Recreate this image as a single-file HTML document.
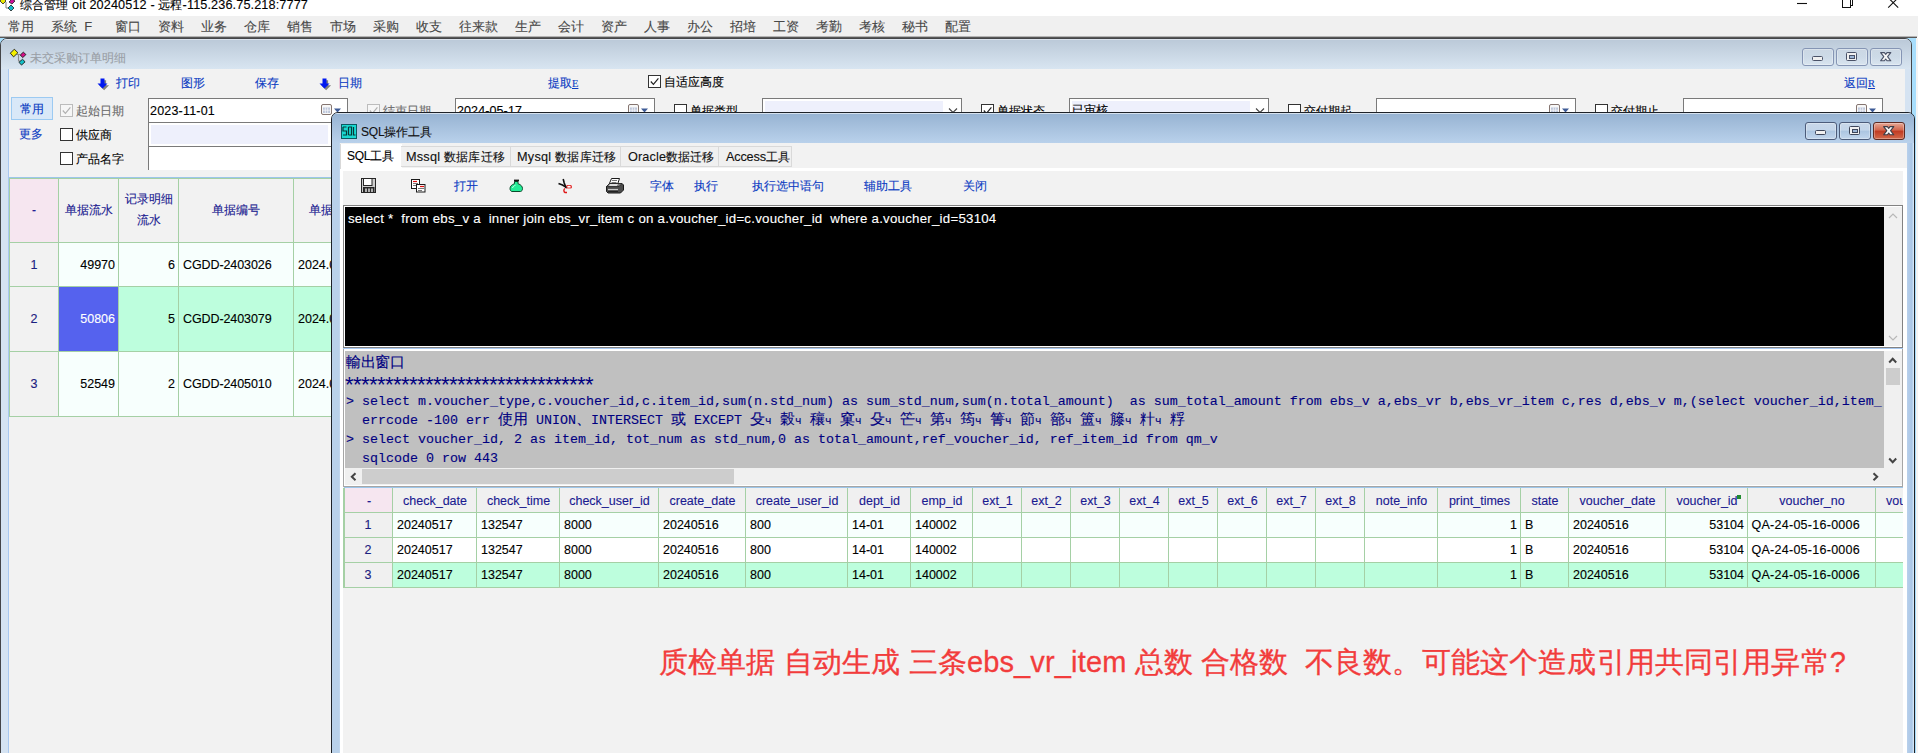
<!DOCTYPE html>
<html><head><meta charset="utf-8"><title>SQL</title>
<style>
*{margin:0;padding:0;box-sizing:border-box}
html,body{width:1918px;height:753px;overflow:hidden;background:#fff}
body{position:relative;font-family:"Liberation Sans",sans-serif;font-size:12px}
.r{position:absolute}
.t{position:absolute;white-space:pre;line-height:16px;height:16px;-webkit-text-stroke:.12px}
.m{font-family:"Liberation Mono",monospace}
.s{font-family:"Liberation Serif",serif}
.L{font-size:12.700px}
svg{position:absolute;overflow:visible}
.cb{position:absolute;width:13px;height:13px;border:1px solid #333;background:#fff}
.cbd{border-color:#bcbcbc;background:#f6f6f6}
.inp{position:absolute;background:#fff;border:1px solid #7a7a7a}
table{border-collapse:collapse}
</style></head><body>

<div class="r" style="left:0px;top:0px;width:1918px;height:16px;background:#fff;"></div>
<svg style="left:0;top:-3px" width="16" height="16" viewBox="0 0 16 16">
<path d="M6 5v6h5" fill="none" stroke="#808080" stroke-width="1"/>
<path d="M0 4l3-3 3 3-3 3z" fill="#e8e800" stroke="#222" stroke-width=".8"/>
<path d="M9 5l3-3 3 2-3 3z" fill="#d0109a" stroke="#222" stroke-width=".8"/>
<path d="M8 11l3-3 3 3-3 3z" fill="#10b8c8" stroke="#222" stroke-width=".8"/>
</svg>
<div class="t " style="left:20px;top:-3px;font-size:12px;color:#000;letter-spacing:0.109px">综合管理<span class="L"> oit 20240512 - </span>远程<span class="L">-115.236.75.218:7777</span></div>
<svg style="left:1790px;top:0" width="120" height="12" viewBox="0 0 120 12">
<path d="M7 3.500h10" stroke="#111" stroke-width="1.100" fill="none"/>
<path d="M52.500 -2V7.500H60.500V-2M62.500 -2V5.500H60.500" stroke="#111" stroke-width="1" fill="none" shape-rendering="crispEdges"/>
<path d="M98.200 -2.300l10 10M108.200 -2.300l-10 10" stroke="#111" stroke-width="1.100" fill="none"/>
</svg>
<div class="r" style="left:0px;top:16px;width:1918px;height:21px;background:#f0f0f0;"></div>
<div class="t " style="left:8px;top:19px;font-size:13px;color:#484848;">常用</div>
<div class="t " style="left:51px;top:19px;font-size:13px;color:#484848;">系统  F</div>
<div class="t " style="left:115px;top:19px;font-size:13px;color:#484848;">窗口</div>
<div class="t " style="left:158px;top:19px;font-size:13px;color:#484848;">资料</div>
<div class="t " style="left:201px;top:19px;font-size:13px;color:#484848;">业务</div>
<div class="t " style="left:244px;top:19px;font-size:13px;color:#484848;">仓库</div>
<div class="t " style="left:287px;top:19px;font-size:13px;color:#484848;">销售</div>
<div class="t " style="left:330px;top:19px;font-size:13px;color:#484848;">市场</div>
<div class="t " style="left:373px;top:19px;font-size:13px;color:#484848;">采购</div>
<div class="t " style="left:416px;top:19px;font-size:13px;color:#484848;">收支</div>
<div class="t " style="left:459px;top:19px;font-size:13px;color:#484848;">往来款</div>
<div class="t " style="left:515px;top:19px;font-size:13px;color:#484848;">生产</div>
<div class="t " style="left:558px;top:19px;font-size:13px;color:#484848;">会计</div>
<div class="t " style="left:601px;top:19px;font-size:13px;color:#484848;">资产</div>
<div class="t " style="left:644px;top:19px;font-size:13px;color:#484848;">人事</div>
<div class="t " style="left:687px;top:19px;font-size:13px;color:#484848;">办公</div>
<div class="t " style="left:730px;top:19px;font-size:13px;color:#484848;">招培</div>
<div class="t " style="left:773px;top:19px;font-size:13px;color:#484848;">工资</div>
<div class="t " style="left:816px;top:19px;font-size:13px;color:#484848;">考勤</div>
<div class="t " style="left:859px;top:19px;font-size:13px;color:#484848;">考核</div>
<div class="t " style="left:902px;top:19px;font-size:13px;color:#484848;">秘书</div>
<div class="t " style="left:945px;top:19px;font-size:13px;color:#484848;">配置</div>
<div class="r" style="left:0px;top:36px;width:1917px;height:1px;background:#b4b4b4;"></div>
<div class="r" style="left:0px;top:37px;width:1917px;height:1px;background:#585858;"></div>
<div class="r" style="left:0px;top:38px;width:1916px;height:720px;background:#a8defc;"></div>
<div class="r" style="left:1916px;top:38px;width:2px;height:720px;background:#f4f4f4;"></div>
<div class="r" style="left:0;top:38px;width:1912px;height:720px;background:#d5e3f2;border:1px solid #444548;border-radius:7px 7px 0 0"></div>
<div class="r" style="left:1px;top:39px;width:1910px;height:30px;background:linear-gradient(#e9eef5,#bccad9 1.500px,#d8e5f1);border-radius:6px 6px 0 0"></div>
<svg style="left:0;top:0" width="40" height="70" viewBox="0 0 40 70">
<path d="M16.500 54.500h4M18.500 54.500v6.500h2" fill="none" stroke="#8a8a8a" stroke-width="1.100"/>
<path d="M10.300 53.200l4-4 3.600 3.500-4.300 4.200z" fill="#f4f000" stroke="#1a1a1a" stroke-width=".9"/>
<path d="M20.300 55l3-2.800 2.600 2.300-3.100 3.100z" fill="#d8108a" stroke="#1a1a1a" stroke-width=".9"/>
<path d="M19 62.300l3.500-3 2.600 2.500-3.600 3.300z" fill="#10c0c8" stroke="#1a1a1a" stroke-width=".9"/>
</svg>
<div class="t " style="left:30px;top:49.5px;font-size:12px;color:#9a9fa6;">未交采购订单明细</div>
<div class="r" style="left:1802px;top:48px;width:32px;height:18px;background:linear-gradient(rgba(255,255,255,.12),rgba(255,255,255,.02) 50%,rgba(255,255,255,.10));border:1px solid #8595b4;border-radius:3px;box-shadow:inset 0 0 0 1px rgba(255,255,255,.3)"></div>
<div class="r" style="left:1812px;top:56px;width:11px;height:5px;background:#f0f0f0;border:1px solid #4a5268;border-radius:1.500px"></div>
<div class="r" style="left:1836px;top:48px;width:32px;height:18px;background:linear-gradient(rgba(255,255,255,.12),rgba(255,255,255,.02) 50%,rgba(255,255,255,.10));border:1px solid #8595b4;border-radius:3px;box-shadow:inset 0 0 0 1px rgba(255,255,255,.3)"></div>
<div class="r" style="left:1846px;top:52px;width:11px;height:9px;background:#f0f0f0;border:1px solid #4a5268;border-radius:1.500px"></div>
<div class="r" style="left:1848.5px;top:55px;width:6px;height:3.500px;background:#9db6d6;border:1px solid #4a5268"></div>
<div class="r" style="left:1870px;top:48px;width:32px;height:18px;background:linear-gradient(rgba(255,255,255,.12),rgba(255,255,255,.02) 50%,rgba(255,255,255,.10));border:1px solid #8595b4;border-radius:3px;box-shadow:inset 0 0 0 1px rgba(255,255,255,.3)"></div>
<svg style="left:1880px;top:52px" width="12" height="10" viewBox="0 0 12 10"><path d="M.6.600h3.800L5.700 2.400 7 .6h3.800L7.600 4.700l3.200 4.100H7L5.700 7 4.400 8.800H.600L3.800 4.700z" fill="#f6f6f6" stroke="#4a5268" stroke-width="1.100" stroke-linejoin="round"/></svg>
<div class="r" style="left:8px;top:69px;width:1897px;height:690px;background:#f2f2f2;border-left:1px solid #a8c8f0"></div>
<svg style="left:97px;top:78px" width="12" height="12" viewBox="0 0 12 12"><path d="M4.5 1.5h4v5h3l-5 5-5-5h3z" fill="#808080" transform="translate(.6,.8)"/><path d="M3.5 0.5h4v5h3l-5 5-5-5h3z" fill="#0018f0"/></svg>
<div class="t " style="left:116px;top:75px;font-size:12px;color:#0c3cc2;">打印</div>
<div class="t " style="left:181px;top:75px;font-size:12px;color:#0c3cc2;">图形</div>
<div class="t " style="left:255px;top:75px;font-size:12px;color:#0c3cc2;">保存</div>
<svg style="left:319px;top:78px" width="12" height="12" viewBox="0 0 12 12"><path d="M4.5 1.5h4v5h3l-5 5-5-5h3z" fill="#808080" transform="translate(.6,.8)"/><path d="M3.5 0.5h4v5h3l-5 5-5-5h3z" fill="#0018f0"/></svg>
<div class="t " style="left:338px;top:75px;font-size:12px;color:#0c3cc2;">日期</div>
<div class="t " style="left:548px;top:75px;font-size:12px;color:#0c3cc2;">提取<span class="s" style="text-decoration:underline;font-size:10.5px">E</span></div>
<div class="cb" style="left:648px;top:75px"></div>
<svg style="left:648px;top:75px" width="13" height="13" viewBox="0 0 13 13"><path d="M2.8 6.5l2.6 2.8 5-6" fill="none" stroke="#222" stroke-width="1.2"/></svg>
<div class="t " style="left:664px;top:74px;font-size:12px;color:#000;">自适应高度</div>
<div class="t " style="left:1844px;top:75px;font-size:12px;color:#0c3cc2;">返回<span class="s" style="text-decoration:underline;font-size:10.5px">R</span></div>
<div class="r" style="left:11px;top:97px;width:42px;height:23px;background:#d9e8f8;border:1px solid #9ccaf2"></div>
<div class="t " style="left:20px;top:101px;font-size:12px;color:#0c3cc2;">常用</div>
<div class="t " style="left:19px;top:126px;font-size:12px;color:#0c3cc2;">更多</div>
<div class="cb cbd" style="left:60px;top:104px"></div>
<svg style="left:60px;top:104px" width="13" height="13" viewBox="0 0 13 13"><path d="M2.8 6.5l2.6 2.8 5-6" fill="none" stroke="#b0b0b0" stroke-width="1.2"/></svg>
<div class="t " style="left:76px;top:102.5px;font-size:12px;color:#6a6a6a;">起始日期</div>
<div class="inp" style="left:148px;top:98px;width:200px;height:25px"></div>
<div class="t " style="left:150px;top:103px;font-size:12.5px;color:#000;letter-spacing:0.198px">2023-11-01</div>
<svg style="left:321px;top:104px" width="22" height="12" viewBox="0 0 22 12"><rect x=".5" y=".5" width="10" height="10" rx="1.5" fill="#f8f8f8" stroke="#857570"/><rect x="2" y="3.5" width="7" height="5.5" fill="#bcc6da"/><path d="M2 6.2h7M4.3 3.5v5.5M6.700 3.5v5.5" stroke="#f4f4f8" stroke-width=".8"/><path d="M13 4.5h7l-3.5 4z" fill="#3d5a96"/></svg>
<div class="cb cbd" style="left:367px;top:104px"></div>
<svg style="left:367px;top:104px" width="13" height="13" viewBox="0 0 13 13"><path d="M2.8 6.5l2.6 2.8 5-6" fill="none" stroke="#b0b0b0" stroke-width="1.2"/></svg>
<div class="t " style="left:383px;top:102.5px;font-size:12px;color:#6a6a6a;">结束日期</div>
<div class="inp" style="left:455px;top:98px;width:200px;height:25px"></div>
<div class="t " style="left:457px;top:103px;font-size:12.5px;color:#000;letter-spacing:0.105px">2024-05-17</div>
<svg style="left:628px;top:104px" width="22" height="12" viewBox="0 0 22 12"><rect x=".5" y=".5" width="10" height="10" rx="1.5" fill="#f8f8f8" stroke="#857570"/><rect x="2" y="3.5" width="7" height="5.5" fill="#bcc6da"/><path d="M2 6.2h7M4.3 3.5v5.5M6.700 3.5v5.5" stroke="#f4f4f8" stroke-width=".8"/><path d="M13 4.5h7l-3.5 4z" fill="#3d5a96"/></svg>
<div class="cb" style="left:674px;top:104px"></div>
<div class="t " style="left:690px;top:103px;font-size:12px;color:#000;">单据类型</div>
<div class="inp" style="left:762px;top:98px;width:200px;height:25px"></div>
<div class="r" style="left:765px;top:101px;width:177.5px;height:20px;background:#eef0fc;"></div>
<svg style="left:948px;top:107px" width="10" height="8" viewBox="0 0 10 8"><path d="M1 1.5l4 4 4-4" fill="none" stroke="#444" stroke-width="1.1"/></svg>
<div class="cb" style="left:981px;top:104px"></div>
<svg style="left:981px;top:104px" width="13" height="13" viewBox="0 0 13 13"><path d="M2.8 6.5l2.6 2.8 5-6" fill="none" stroke="#222" stroke-width="1.2"/></svg>
<div class="t " style="left:997px;top:103px;font-size:12px;color:#000;">单据状态</div>
<div class="inp" style="left:1069px;top:98px;width:200px;height:25px"></div>
<div class="r" style="left:1072px;top:101px;width:177.5px;height:20px;background:#eef0fc;"></div>
<div class="t " style="left:1072px;top:102px;font-size:12px;color:#000;">已审核</div>
<svg style="left:1255px;top:107px" width="10" height="8" viewBox="0 0 10 8"><path d="M1 1.5l4 4 4-4" fill="none" stroke="#444" stroke-width="1.1"/></svg>
<div class="cb" style="left:1288px;top:104px"></div>
<div class="t " style="left:1304px;top:103px;font-size:12px;color:#000;">交付期起</div>
<div class="inp" style="left:1376px;top:98px;width:200px;height:25px"></div>
<svg style="left:1549px;top:104px" width="22" height="12" viewBox="0 0 22 12"><rect x=".5" y=".5" width="10" height="10" rx="1.5" fill="#f8f8f8" stroke="#857570"/><rect x="2" y="3.5" width="7" height="5.5" fill="#bcc6da"/><path d="M2 6.2h7M4.3 3.5v5.5M6.700 3.5v5.5" stroke="#f4f4f8" stroke-width=".8"/><path d="M13 4.5h7l-3.5 4z" fill="#3d5a96"/></svg>
<div class="cb" style="left:1595px;top:104px"></div>
<div class="t " style="left:1611px;top:103px;font-size:12px;color:#000;">交付期止</div>
<div class="inp" style="left:1683px;top:98px;width:200px;height:25px"></div>
<svg style="left:1856px;top:104px" width="22" height="12" viewBox="0 0 22 12"><rect x=".5" y=".5" width="10" height="10" rx="1.5" fill="#f8f8f8" stroke="#857570"/><rect x="2" y="3.5" width="7" height="5.5" fill="#bcc6da"/><path d="M2 6.2h7M4.3 3.5v5.5M6.700 3.5v5.5" stroke="#f4f4f8" stroke-width=".8"/><path d="M13 4.5h7l-3.5 4z" fill="#3d5a96"/></svg>
<div class="cb" style="left:60px;top:128px"></div>
<div class="t " style="left:76px;top:127px;font-size:12px;color:#000;">供应商</div>
<div class="inp" style="left:148px;top:122px;width:300px;height:25px"></div>
<div class="r" style="left:151px;top:125px;width:177px;height:19px;background:#eef0fc;"></div>
<div class="cb" style="left:60px;top:152px"></div>
<div class="t " style="left:76px;top:151px;font-size:12px;color:#000;">产品名字</div>
<div class="inp" style="left:148px;top:146px;width:300px;height:24px;border-bottom:none"></div>
<div class="r" style="left:9px;top:177px;width:330px;height:1px;background:#9cc6ea;"></div>
<div class="r" style="left:9px;top:178px;width:330px;height:239px;background:#f7fffd;"></div>
<div class="r" style="left:10px;top:178px;width:48px;height:64.5px;background:#f6e6f0;"></div>
<div class="r" style="left:58px;top:178px;width:280px;height:64.5px;background:#f2f2f2;"></div>
<div class="r" style="left:10px;top:243px;width:48px;height:174px;background:#f2f2f2;"></div>
<div class="r" style="left:58px;top:287px;width:280px;height:64px;background:#bdfedd;"></div>
<div class="r" style="left:59px;top:287px;width:59px;height:64px;background:#5562ee;"></div>
<div class="r" style="left:9px;top:178px;width:1px;height:239px;background:#a5d0a5;"></div>
<div class="r" style="left:58px;top:178px;width:1px;height:239px;background:#a5d0a5;"></div>
<div class="r" style="left:118px;top:178px;width:1px;height:239px;background:#a5d0a5;"></div>
<div class="r" style="left:178px;top:178px;width:1px;height:239px;background:#a5d0a5;"></div>
<div class="r" style="left:293px;top:178px;width:1px;height:239px;background:#a5d0a5;"></div>
<div class="r" style="left:9px;top:178px;width:330px;height:1px;background:#a5d0a5;"></div>
<div class="r" style="left:9px;top:242px;width:330px;height:1px;background:#a5d0a5;"></div>
<div class="r" style="left:9px;top:286px;width:330px;height:1px;background:#a5d0a5;"></div>
<div class="r" style="left:9px;top:351px;width:330px;height:1px;background:#a5d0a5;"></div>
<div class="r" style="left:9px;top:416px;width:330px;height:1px;background:#a5d0a5;"></div>
<div class="t " style="left:10px;top:202px;font-size:12px;color:#1a1a90;width:48px;text-align:center">-</div>
<div class="t " style="left:59px;top:202px;font-size:12px;color:#1a1a90;width:59px;text-align:center">单据流水</div>
<div class="t " style="left:119px;top:191px;font-size:12px;color:#1a1a90;width:59px;text-align:center">记录明细</div>
<div class="t " style="left:119px;top:212px;font-size:12px;color:#1a1a90;width:59px;text-align:center">流水</div>
<div class="t " style="left:179px;top:202px;font-size:12px;color:#1a1a90;width:114px;text-align:center">单据编号</div>
<div class="t " style="left:309px;top:202px;font-size:12px;color:#1a1a90;">单据</div>
<div class="t " style="left:10px;top:257px;font-size:12.5px;color:#1c2080;width:48px;text-align:center">1</div>
<div class="t " style="left:59px;top:257px;font-size:12.5px;color:#000;width:56px;text-align:right">49970</div>
<div class="t " style="left:119px;top:257px;font-size:12.5px;color:#000;width:56px;text-align:right">6</div>
<div class="t " style="left:183px;top:257px;font-size:12.5px;color:#000;letter-spacing:-0.095px">CGDD-2403026</div>
<div class="t " style="left:298px;top:257px;font-size:12.5px;color:#000;">2024.0</div>
<div class="t " style="left:10px;top:311px;font-size:12.5px;color:#1c2080;width:48px;text-align:center">2</div>
<div class="t " style="left:59px;top:311px;font-size:12.5px;color:#fff;width:56px;text-align:right">50806</div>
<div class="t " style="left:119px;top:311px;font-size:12.5px;color:#000;width:56px;text-align:right">5</div>
<div class="t " style="left:183px;top:311px;font-size:12.5px;color:#000;letter-spacing:-0.095px">CGDD-2403079</div>
<div class="t " style="left:298px;top:311px;font-size:12.5px;color:#000;">2024.0</div>
<div class="t " style="left:10px;top:376px;font-size:12.5px;color:#1c2080;width:48px;text-align:center">3</div>
<div class="t " style="left:59px;top:376px;font-size:12.5px;color:#000;width:56px;text-align:right">52549</div>
<div class="t " style="left:119px;top:376px;font-size:12.5px;color:#000;width:56px;text-align:right">2</div>
<div class="t " style="left:183px;top:376px;font-size:12.5px;color:#000;letter-spacing:-0.095px">CGDD-2405010</div>
<div class="t " style="left:298px;top:376px;font-size:12.5px;color:#000;">2024.0</div>
<div class="r" style="left:331px;top:112px;width:1584px;height:660px;background:linear-gradient(90deg,#b9d1ea,#b9d1ea 7px,#c6daf0 8px,#c6daf0 1573px,#b4cdea 1576px,#a9c6e6 1580px,#dff0fc 1582px);border:1px solid #1e2228;border-radius:7px 7px 0 0"></div>
<div class="r" style="left:332px;top:113px;width:1582px;height:30px;background:linear-gradient(#f4f8fc,#98b4d3 1.500px,#b9d1eb);border-radius:6px 6px 0 0"></div>
<svg style="left:341px;top:124px" width="16" height="15" viewBox="0 0 16 15"><rect x=".5" y=".5" width="15" height="14" fill="#18d8d0" stroke="#0a5a60"/><path d="M2 3h3.5M2 3v4h3.5v4H2M7.5 3v8M7.5 3h3v8h-3M12.5 3v8h2" fill="none" stroke="#083838" stroke-width="1.2"/></svg>
<div class="t " style="left:361px;top:123.5px;font-size:12px;color:#111;letter-spacing:-0.217px">SQL操作工具</div>
<div class="r" style="left:1805px;top:122px;width:32px;height:18px;background:linear-gradient(rgba(255,255,255,.42),rgba(255,255,255,.30) 45%,rgba(255,255,255,0) 50%,rgba(255,255,255,.18));border:1px solid #4c5c7a;border-radius:3px;box-shadow:inset 0 0 0 1px rgba(255,255,255,.3)"></div>
<div class="r" style="left:1815px;top:130px;width:11px;height:5px;background:#f0f0f0;border:1px solid #3e465a;border-radius:1.500px"></div>
<div class="r" style="left:1839px;top:122px;width:32px;height:18px;background:linear-gradient(rgba(255,255,255,.42),rgba(255,255,255,.30) 45%,rgba(255,255,255,0) 50%,rgba(255,255,255,.18));border:1px solid #4c5c7a;border-radius:3px;box-shadow:inset 0 0 0 1px rgba(255,255,255,.3)"></div>
<div class="r" style="left:1849px;top:126px;width:11px;height:9px;background:#f0f0f0;border:1px solid #3e465a;border-radius:1.500px"></div>
<div class="r" style="left:1851.5px;top:129px;width:6px;height:3.500px;background:#9db6d6;border:1px solid #3e465a"></div>
<div class="r" style="left:1873px;top:122px;width:32px;height:18px;background:linear-gradient(#e6a896,#d2654c 45%,#c03a22 50%,#d26a4c);border:1px solid #5e2a22;border-radius:3px;box-shadow:inset 0 0 0 1px rgba(255,255,255,.3)"></div>
<svg style="left:1883px;top:126px" width="12" height="10" viewBox="0 0 12 10"><path d="M.6.600h3.800L5.700 2.400 7 .6h3.800L7.600 4.700l3.200 4.100H7L5.700 7 4.400 8.800H.600L3.800 4.700z" fill="#f6f6f6" stroke="#3e3e48" stroke-width="1.100" stroke-linejoin="round"/></svg>
<div class="r" style="left:340px;top:143px;width:1567px;height:620px;background:#f2f2f2;"></div>
<div class="r" style="left:340px;top:167.5px;width:1567px;height:600px;background:#fff;"></div>
<div class="r" style="left:343px;top:171px;width:1560px;height:600px;background:#f2f2f2;"></div>
<div class="r" style="left:339.5px;top:143.5px;width:62px;height:25px;background:#fff;border-left:1px solid #d8d8d8"></div>
<div class="t " style="left:347px;top:148px;font-size:12px;color:#000;letter-spacing:-0.303px">SQL工具</div>
<div class="r" style="left:401px;top:146px;width:110px;height:21px;background:#f0f0f0;border:1px solid #d9d9d9;border-left:none"></div>
<div class="t " style="left:406px;top:149px;font-size:12px;color:#111;letter-spacing:0.213px"><span class="L">Mssql </span>数据库迁移</div>
<div class="r" style="left:511px;top:146px;width:110px;height:21px;background:#f0f0f0;border:1px solid #d9d9d9;border-left:none"></div>
<div class="t " style="left:517px;top:149px;font-size:12px;color:#111;letter-spacing:0.259px"><span class="L">Mysql </span>数据库迁移</div>
<div class="r" style="left:621px;top:146px;width:98px;height:21px;background:#f0f0f0;border:1px solid #d9d9d9;border-left:none"></div>
<div class="t " style="left:628px;top:149px;font-size:12px;color:#111;letter-spacing:0.113px"><span class="L">Oracle</span>数据迁移</div>
<div class="r" style="left:719px;top:146px;width:73px;height:21px;background:#f0f0f0;border:1px solid #d9d9d9;border-left:none"></div>
<div class="t " style="left:726px;top:149px;font-size:12px;color:#111;letter-spacing:-0.176px"><span class="L">Access</span>工具</div>
<svg style="left:361px;top:178px" width="16" height="16" viewBox="0 0 16 16"><rect x=".5" y=".5" width="14" height="14" fill="#cfcfcf" stroke="#262626"/><rect x="2.500" y=".5" width="8.500" height="7" fill="#fff" stroke="#262626"/><rect x="2.500" y="9.500" width="10.500" height="5" fill="#2c2c2c" stroke="#262626"/><path d="M5 10.500v3.500M8 10.500v3.500M11 10.500v3.500" stroke="#e8e8e8" stroke-width="1.400"/></svg>
<svg style="left:411px;top:179px" width="15" height="14" viewBox="0 0 15 14"><rect x=".5" y=".5" width="8" height="9" fill="#fff" stroke="#1a1a1a"/><path d="M2 2.500h4" stroke="#e01010" stroke-width="1.200"/><path d="M2 4.500h5M2 6.500h3" stroke="#777" stroke-width="1"/><rect x="5.500" y="5.500" width="8.500" height="7.500" fill="#fff" stroke="#1a1a1a"/><path d="M9 7.500h4" stroke="#e01010" stroke-width="1.200"/><path d="M7 9.500h6M7 11.500h4" stroke="#777" stroke-width="1"/></svg>
<div class="t " style="left:454px;top:178px;font-size:12px;color:#0c3cc2;">打开</div>
<svg style="left:509px;top:179px" width="15" height="14" viewBox="0 0 15 14"><path d="M5.500 2.500v2.200C2.500 5.700 1 7.500 1 9.600 1 11.300 2 12.500 3 12.500h8.500c1 0 2-1.200 2-2.900 0-2.100-1.500-3.900-4.500-4.900V2.500z" fill="#22ec96" stroke="#0c4a2c" stroke-width="1"/><path d="M5 1.500h5" stroke="#111" stroke-width="1.800"/><path d="M3.500 9c.5-1.500 1.600-2.300 3-2.800" fill="none" stroke="#c8ffe8" stroke-width="1"/></svg>
<svg style="left:558px;top:178px" width="16" height="16" viewBox="0 0 16 16"><path d="M5.200 1l1 4 2 5" stroke="#111" stroke-width="1.600" fill="none"/><path d="M.5 5.500l4 1.500 4.500 2.800" stroke="#111" stroke-width="1.600" fill="none"/><path d="M8.500 9h5.500" stroke="#e01818" stroke-width="1.300"/><rect x="9" y="7.500" width="4" height="2.500" fill="#fff" stroke="#e01818" stroke-width=".8"/><path d="M7 10.500c-1.500.8-1.500 3.500 0 4h2" fill="none" stroke="#e01818" stroke-width="1.400"/></svg>
<svg style="left:605px;top:177px" width="20" height="17" viewBox="0 0 20 17"><path d="M6.500 1.500h8l-2 6h-8.500z" fill="#fff" stroke="#1a1a1a"/><path d="M7 3.500h5M6.500 5.500h5" stroke="#666" stroke-width=".9"/><path d="M1.500 9.500l3-3h12.500l1.500 1.500v5l-3 3h-12.500l-1.500-1.500z" fill="#4c4c4c" stroke="#1a1a1a"/><path d="M4.500 6.500h12.500l-3 3h-12.500z" fill="#7a7a7a" stroke="#1a1a1a" stroke-width=".6"/><path d="M5 7.200h8l-1.200 1.600H4z" fill="#fff"/><path d="M3 12.500h10" stroke="#c8c8c8" stroke-width="1.200"/><path d="M3 14.500h10" stroke="#222" stroke-width="1"/></svg>
<div class="t " style="left:650px;top:178px;font-size:12px;color:#0c3cc2;">字体</div>
<div class="t " style="left:694px;top:178px;font-size:12px;color:#0c3cc2;">执行</div>
<div class="t " style="left:752px;top:178px;font-size:12px;color:#0c3cc2;">执行选中语句</div>
<div class="t " style="left:864px;top:178px;font-size:12px;color:#0c3cc2;">辅助工具</div>
<div class="t " style="left:963px;top:178px;font-size:12px;color:#0c3cc2;">关闭</div>
<div class="r" style="left:343px;top:205px;width:1560px;height:142.5px;background:#000;border:1px solid #828282;box-shadow:inset 0 0 0 1px #fff"></div>
<div class="r" style="left:1884px;top:207px;width:18px;height:139px;background:#f0f0f0;"></div>
<svg style="left:1887.500px;top:213px" width="10" height="6" viewBox="0 0 10 6"><path d="M1 5l4-4 4 4" fill="none" stroke="#b8b8b8" stroke-width="1.2"/></svg>
<svg style="left:1887.500px;top:335px" width="10" height="6" viewBox="0 0 10 6"><path d="M1 1l4 4 4-4" fill="none" stroke="#b8b8b8" stroke-width="1.2"/></svg>
<div class="t " style="left:348px;top:211px;font-size:13.3px;color:#fff;letter-spacing:0.225px">select *  from ebs_v a  inner join ebs_vr_item c on a.voucher_id=c.voucher_id  where a.voucher_id=53104</div>
<div class="r" style="left:343px;top:347.5px;width:1560px;height:1px;background:#a8c8f0;"></div>
<div class="r" style="left:343px;top:348.5px;width:1560px;height:138px;background:#fff;border-left:1px solid #a6a6a6"></div>
<div class="r" style="left:345px;top:350.5px;width:1539px;height:117.5px;background:#c0c0c0;"></div>
<div class="t" style="left:346px;top:352px;font-size:15px;color:#000080;line-height:19px;letter-spacing:-.3px">輸出窗口</div>
<div class="t m" style="left:342.700px;top:376.300px;font-size:22px;letter-spacing:-5.200px;color:#000080;line-height:24px;height:24px;-webkit-text-stroke:0">*******************************</div>
<div class="t m" style="left:346px;top:391.5px;font-size:13.333px;color:#000080;line-height:19px;height:19px">&gt; select m.voucher_type,c.voucher_id,c.item_id,sum(n.std_num) as sum_std_num,sum(n.total_amount)  as sum_total_amount from ebs_v a,ebs_vr b,ebs_vr_item c,res d,ebs_v m,(select voucher_id,item_</div>
<div class="t m" style="left:346px;top:410.5px;font-size:13.333px;color:#000080;line-height:19px;height:19px">  errcode -100 err <span style="font-family:'Liberation Sans',sans-serif;font-size:15px;letter-spacing:0;display:inline-block;width:15px;line-height:15px">使</span><span style="font-family:'Liberation Sans',sans-serif;font-size:15px;letter-spacing:0;display:inline-block;width:15px;line-height:15px">用</span> UNION<span style="font-family:'Liberation Sans',sans-serif;font-size:15px;letter-spacing:0;display:inline-block;width:15px;line-height:15px">、</span>INTERSECT <span style="font-family:'Liberation Sans',sans-serif;font-size:15px;letter-spacing:0;display:inline-block;width:15px;line-height:15px">或</span> EXCEPT <span style="font-family:'Liberation Sans',sans-serif;font-size:15px;letter-spacing:0;display:inline-block;width:15px;line-height:15px">殳</span><span style="display:inline-block;width:7px;font-size:11px">ч</span> <span style="font-family:'Liberation Sans',sans-serif;font-size:15px;letter-spacing:0;display:inline-block;width:15px;line-height:15px">穀</span><span style="display:inline-block;width:7px;font-size:11px">ч</span> <span style="font-family:'Liberation Sans',sans-serif;font-size:15px;letter-spacing:0;display:inline-block;width:15px;line-height:15px">穰</span><span style="display:inline-block;width:7px;font-size:11px">ч</span> <span style="font-family:'Liberation Sans',sans-serif;font-size:15px;letter-spacing:0;display:inline-block;width:15px;line-height:15px">窠</span><span style="display:inline-block;width:7px;font-size:11px">ч</span> <span style="font-family:'Liberation Sans',sans-serif;font-size:15px;letter-spacing:0;display:inline-block;width:15px;line-height:15px">殳</span><span style="display:inline-block;width:7px;font-size:11px">ч</span> <span style="font-family:'Liberation Sans',sans-serif;font-size:15px;letter-spacing:0;display:inline-block;width:15px;line-height:15px">笀</span><span style="display:inline-block;width:7px;font-size:11px">ч</span> <span style="font-family:'Liberation Sans',sans-serif;font-size:15px;letter-spacing:0;display:inline-block;width:15px;line-height:15px">第</span><span style="display:inline-block;width:7px;font-size:11px">ч</span> <span style="font-family:'Liberation Sans',sans-serif;font-size:15px;letter-spacing:0;display:inline-block;width:15px;line-height:15px">筠</span><span style="display:inline-block;width:7px;font-size:11px">ч</span> <span style="font-family:'Liberation Sans',sans-serif;font-size:15px;letter-spacing:0;display:inline-block;width:15px;line-height:15px">箐</span><span style="display:inline-block;width:7px;font-size:11px">ч</span> <span style="font-family:'Liberation Sans',sans-serif;font-size:15px;letter-spacing:0;display:inline-block;width:15px;line-height:15px">節</span><span style="display:inline-block;width:7px;font-size:11px">ч</span> <span style="font-family:'Liberation Sans',sans-serif;font-size:15px;letter-spacing:0;display:inline-block;width:15px;line-height:15px">篰</span><span style="display:inline-block;width:7px;font-size:11px">ч</span> <span style="font-family:'Liberation Sans',sans-serif;font-size:15px;letter-spacing:0;display:inline-block;width:15px;line-height:15px">簠</span><span style="display:inline-block;width:7px;font-size:11px">ч</span> <span style="font-family:'Liberation Sans',sans-serif;font-size:15px;letter-spacing:0;display:inline-block;width:15px;line-height:15px">籐</span><span style="display:inline-block;width:7px;font-size:11px">ч</span> <span style="font-family:'Liberation Sans',sans-serif;font-size:15px;letter-spacing:0;display:inline-block;width:15px;line-height:15px">籵</span><span style="display:inline-block;width:7px;font-size:11px">ч</span> <span style="font-family:'Liberation Sans',sans-serif;font-size:15px;letter-spacing:0;display:inline-block;width:15px;line-height:15px">粰</span></div>
<div class="t m" style="left:346px;top:429.5px;font-size:13.333px;color:#000080;line-height:19px;height:19px">&gt; select voucher_id, 2 as item_id, tot_num as std_num,0 as total_amount,ref_voucher_id, ref_item_id from qm_v</div>
<div class="t m" style="left:346px;top:448.5px;font-size:13.333px;color:#000080;line-height:19px;height:19px">  sqlcode 0 row 443</div>
<div class="r" style="left:1884px;top:350.5px;width:18px;height:134px;background:#f0f0f0;"></div>
<svg style="left:1888px;top:357px" width="10" height="7" viewBox="0 0 10 7"><path d="M1.200 5.500L4.700 1.800l3.500 3.700" fill="none" stroke="#444" stroke-width="2"/></svg>
<div class="r" style="left:1885.5px;top:368px;width:14.5px;height:17px;background:#cdcdcd;"></div>
<svg style="left:1888px;top:456.500px" width="10" height="7" viewBox="0 0 10 7"><path d="M1.200 1.500L4.700 5.200l3.500-3.700" fill="none" stroke="#444" stroke-width="2"/></svg>
<div class="r" style="left:345px;top:468px;width:1557px;height:16.5px;background:#f0f0f0;"></div>
<div class="r" style="left:344px;top:485.5px;width:1559px;height:1px;background:#a6a6a6;"></div>
<div class="r" style="left:1902px;top:349px;width:1px;height:137px;background:#a6a6a6;"></div>
<svg style="left:350px;top:472px" width="7" height="10" viewBox="0 0 7 10"><path d="M5.500 1.200L1.800 4.700l3.700 3.500" fill="none" stroke="#444" stroke-width="2"/></svg>
<div class="r" style="left:362px;top:469px;width:372px;height:15px;background:#cdcdcd;"></div>
<svg style="left:1872px;top:472px" width="7" height="10" viewBox="0 0 7 10"><path d="M1.500 1.200L5.200 4.700l-3.700 3.500" fill="none" stroke="#444" stroke-width="2"/></svg>
<div class="r" style="left:344px;top:487px;width:1559px;height:1px;background:#9cc6ea;"></div>
<div class="r" style="left:344px;top:488px;width:1559px;height:100px;background:#fff;"></div>
<div class="r" style="left:344px;top:488px;width:1559px;height:24px;background:#f0f0f0;"></div>
<div class="r" style="left:344px;top:488px;width:48px;height:24px;background:#f6e6f0;"></div>
<div class="r" style="left:344px;top:512px;width:48px;height:76px;background:#f0f0f0;"></div>
<div class="r" style="left:392px;top:512px;width:1511px;height:25px;background:#f7fffd;"></div>
<div class="r" style="left:392px;top:562px;width:1511px;height:25px;background:#bdfedd;"></div>
<div class="r" style="left:344px;top:488px;width:1559px;height:100px;overflow:hidden">
<div class="r" style="left:0px;top:0px;width:1px;height:100px;background:#a5d0a5;"></div>
<div class="t " style="left:1px;top:5px;font-size:12.5px;color:#1a1a90;width:48px;text-align:center">-</div>
<div class="r" style="left:48px;top:0px;width:1px;height:100px;background:#a5d0a5;"></div>
<div class="t " style="left:49px;top:5px;font-size:12.5px;color:#1a1a90;width:84px;text-align:center">check_date</div>
<div class="r" style="left:132px;top:0px;width:1px;height:100px;background:#a5d0a5;"></div>
<div class="t " style="left:133px;top:5px;font-size:12.5px;color:#1a1a90;width:83px;text-align:center">check_time</div>
<div class="r" style="left:215px;top:0px;width:1px;height:100px;background:#a5d0a5;"></div>
<div class="t " style="left:216px;top:5px;font-size:12.5px;color:#1a1a90;width:99px;text-align:center">check_user_id</div>
<div class="r" style="left:314px;top:0px;width:1px;height:100px;background:#a5d0a5;"></div>
<div class="t " style="left:315px;top:5px;font-size:12.5px;color:#1a1a90;width:87px;text-align:center">create_date</div>
<div class="r" style="left:401px;top:0px;width:1px;height:100px;background:#a5d0a5;"></div>
<div class="t " style="left:402px;top:5px;font-size:12.5px;color:#1a1a90;width:102px;text-align:center">create_user_id</div>
<div class="r" style="left:503px;top:0px;width:1px;height:100px;background:#a5d0a5;"></div>
<div class="t " style="left:504px;top:5px;font-size:12.5px;color:#1a1a90;width:63px;text-align:center">dept_id</div>
<div class="r" style="left:566px;top:0px;width:1px;height:100px;background:#a5d0a5;"></div>
<div class="t " style="left:567px;top:5px;font-size:12.5px;color:#1a1a90;width:62px;text-align:center">emp_id</div>
<div class="r" style="left:628px;top:0px;width:1px;height:100px;background:#a5d0a5;"></div>
<div class="t " style="left:629px;top:5px;font-size:12.5px;color:#1a1a90;width:49px;text-align:center">ext_1</div>
<div class="r" style="left:677px;top:0px;width:1px;height:100px;background:#a5d0a5;"></div>
<div class="t " style="left:678px;top:5px;font-size:12.5px;color:#1a1a90;width:49px;text-align:center">ext_2</div>
<div class="r" style="left:726px;top:0px;width:1px;height:100px;background:#a5d0a5;"></div>
<div class="t " style="left:727px;top:5px;font-size:12.5px;color:#1a1a90;width:49px;text-align:center">ext_3</div>
<div class="r" style="left:775px;top:0px;width:1px;height:100px;background:#a5d0a5;"></div>
<div class="t " style="left:776px;top:5px;font-size:12.5px;color:#1a1a90;width:49px;text-align:center">ext_4</div>
<div class="r" style="left:824px;top:0px;width:1px;height:100px;background:#a5d0a5;"></div>
<div class="t " style="left:825px;top:5px;font-size:12.5px;color:#1a1a90;width:49px;text-align:center">ext_5</div>
<div class="r" style="left:873px;top:0px;width:1px;height:100px;background:#a5d0a5;"></div>
<div class="t " style="left:874px;top:5px;font-size:12.5px;color:#1a1a90;width:49px;text-align:center">ext_6</div>
<div class="r" style="left:922px;top:0px;width:1px;height:100px;background:#a5d0a5;"></div>
<div class="t " style="left:923px;top:5px;font-size:12.5px;color:#1a1a90;width:49px;text-align:center">ext_7</div>
<div class="r" style="left:971px;top:0px;width:1px;height:100px;background:#a5d0a5;"></div>
<div class="t " style="left:972px;top:5px;font-size:12.5px;color:#1a1a90;width:49px;text-align:center">ext_8</div>
<div class="r" style="left:1020px;top:0px;width:1px;height:100px;background:#a5d0a5;"></div>
<div class="t " style="left:1021px;top:5px;font-size:12.5px;color:#1a1a90;width:73px;text-align:center">note_info</div>
<div class="r" style="left:1093px;top:0px;width:1px;height:100px;background:#a5d0a5;"></div>
<div class="t " style="left:1094px;top:5px;font-size:12.5px;color:#1a1a90;width:83px;text-align:center">print_times</div>
<div class="r" style="left:1176px;top:0px;width:1px;height:100px;background:#a5d0a5;"></div>
<div class="t " style="left:1177px;top:5px;font-size:12.5px;color:#1a1a90;width:48px;text-align:center">state</div>
<div class="r" style="left:1224px;top:0px;width:1px;height:100px;background:#a5d0a5;"></div>
<div class="t " style="left:1225px;top:5px;font-size:12.5px;color:#1a1a90;width:97px;text-align:center">voucher_date</div>
<div class="r" style="left:1321px;top:0px;width:1px;height:100px;background:#a5d0a5;"></div>
<div class="t " style="left:1322px;top:5px;font-size:12.5px;color:#1a1a90;width:82px;text-align:center">voucher_id</div>
<div class="r" style="left:1403px;top:0px;width:1px;height:100px;background:#a5d0a5;"></div>
<div class="t " style="left:1404px;top:5px;font-size:12.5px;color:#1a1a90;width:128px;text-align:center">voucher_no</div>
<div class="r" style="left:1531px;top:0px;width:1px;height:100px;background:#a5d0a5;"></div>
<div class="t " style="left:1542px;top:5px;font-size:12.5px;color:#1a1a90;">vou</div>
<div class="t " style="left:0px;top:29px;font-size:12.5px;color:#1c2080;width:48px;text-align:center">1</div>
<div class="t " style="left:53px;top:29px;font-size:12.5px;color:#000;">20240517</div>
<div class="t " style="left:137px;top:29px;font-size:12.5px;color:#000;">132547</div>
<div class="t " style="left:220px;top:29px;font-size:12.5px;color:#000;">8000</div>
<div class="t " style="left:319px;top:29px;font-size:12.5px;color:#000;">20240516</div>
<div class="t " style="left:406px;top:29px;font-size:12.5px;color:#000;">800</div>
<div class="t " style="left:508px;top:29px;font-size:12.5px;color:#000;">14-01</div>
<div class="t " style="left:571px;top:29px;font-size:12.5px;color:#000;">140002</div>
<div class="t " style="left:1093px;top:29px;font-size:12.5px;color:#000;width:80px;text-align:right">1</div>
<div class="t " style="left:1181px;top:29px;font-size:12.5px;color:#000;">B</div>
<div class="t " style="left:1229px;top:29px;font-size:12.5px;color:#000;">20240516</div>
<div class="t " style="left:1321px;top:29px;font-size:12.5px;color:#000;width:79px;text-align:right">53104</div>
<div class="t " style="left:1407.5px;top:29px;font-size:12.5px;color:#000;letter-spacing:0.267px">QA-24-05-16-0006</div>
<div class="t " style="left:0px;top:54px;font-size:12.5px;color:#1c2080;width:48px;text-align:center">2</div>
<div class="t " style="left:53px;top:54px;font-size:12.5px;color:#000;">20240517</div>
<div class="t " style="left:137px;top:54px;font-size:12.5px;color:#000;">132547</div>
<div class="t " style="left:220px;top:54px;font-size:12.5px;color:#000;">8000</div>
<div class="t " style="left:319px;top:54px;font-size:12.5px;color:#000;">20240516</div>
<div class="t " style="left:406px;top:54px;font-size:12.5px;color:#000;">800</div>
<div class="t " style="left:508px;top:54px;font-size:12.5px;color:#000;">14-01</div>
<div class="t " style="left:571px;top:54px;font-size:12.5px;color:#000;">140002</div>
<div class="t " style="left:1093px;top:54px;font-size:12.5px;color:#000;width:80px;text-align:right">1</div>
<div class="t " style="left:1181px;top:54px;font-size:12.5px;color:#000;">B</div>
<div class="t " style="left:1229px;top:54px;font-size:12.5px;color:#000;">20240516</div>
<div class="t " style="left:1321px;top:54px;font-size:12.5px;color:#000;width:79px;text-align:right">53104</div>
<div class="t " style="left:1407.5px;top:54px;font-size:12.5px;color:#000;letter-spacing:0.267px">QA-24-05-16-0006</div>
<div class="t " style="left:0px;top:79px;font-size:12.5px;color:#1c2080;width:48px;text-align:center">3</div>
<div class="t " style="left:53px;top:79px;font-size:12.5px;color:#000;">20240517</div>
<div class="t " style="left:137px;top:79px;font-size:12.5px;color:#000;">132547</div>
<div class="t " style="left:220px;top:79px;font-size:12.5px;color:#000;">8000</div>
<div class="t " style="left:319px;top:79px;font-size:12.5px;color:#000;">20240516</div>
<div class="t " style="left:406px;top:79px;font-size:12.5px;color:#000;">800</div>
<div class="t " style="left:508px;top:79px;font-size:12.5px;color:#000;">14-01</div>
<div class="t " style="left:571px;top:79px;font-size:12.5px;color:#000;">140002</div>
<div class="t " style="left:1093px;top:79px;font-size:12.5px;color:#000;width:80px;text-align:right">1</div>
<div class="t " style="left:1181px;top:79px;font-size:12.5px;color:#000;">B</div>
<div class="t " style="left:1229px;top:79px;font-size:12.5px;color:#000;">20240516</div>
<div class="t " style="left:1321px;top:79px;font-size:12.5px;color:#000;width:79px;text-align:right">53104</div>
<div class="t " style="left:1407.5px;top:79px;font-size:12.5px;color:#000;letter-spacing:0.267px">QA-24-05-16-0006</div>
</div>
<div class="r" style="left:344px;top:512px;width:1559px;height:1px;background:#a5d0a5;"></div>
<div class="r" style="left:344px;top:537px;width:1559px;height:1px;background:#a5d0a5;"></div>
<div class="r" style="left:344px;top:562px;width:1559px;height:1px;background:#a5d0a5;"></div>
<div class="r" style="left:344px;top:587px;width:1559px;height:1px;background:#a5d0a5;"></div>
<div class="r" style="left:343.3px;top:488px;width:1px;height:100px;background:#a5d0a5;"></div>
<div class="r" style="left:1737px;top:495px;width:4px;height:4px;background:#208a30;"></div>
<div class="t " style="left:659px;top:642px;font-size:29px;color:#f23c3c;line-height:40px;height:40px;-webkit-text-stroke:.3px;letter-spacing:0.148px">质检单据 自动生成 三条ebs_vr_item 总数 合格数  不良数。可能这个造成引用共同引用异常?</div>
</body></html>
